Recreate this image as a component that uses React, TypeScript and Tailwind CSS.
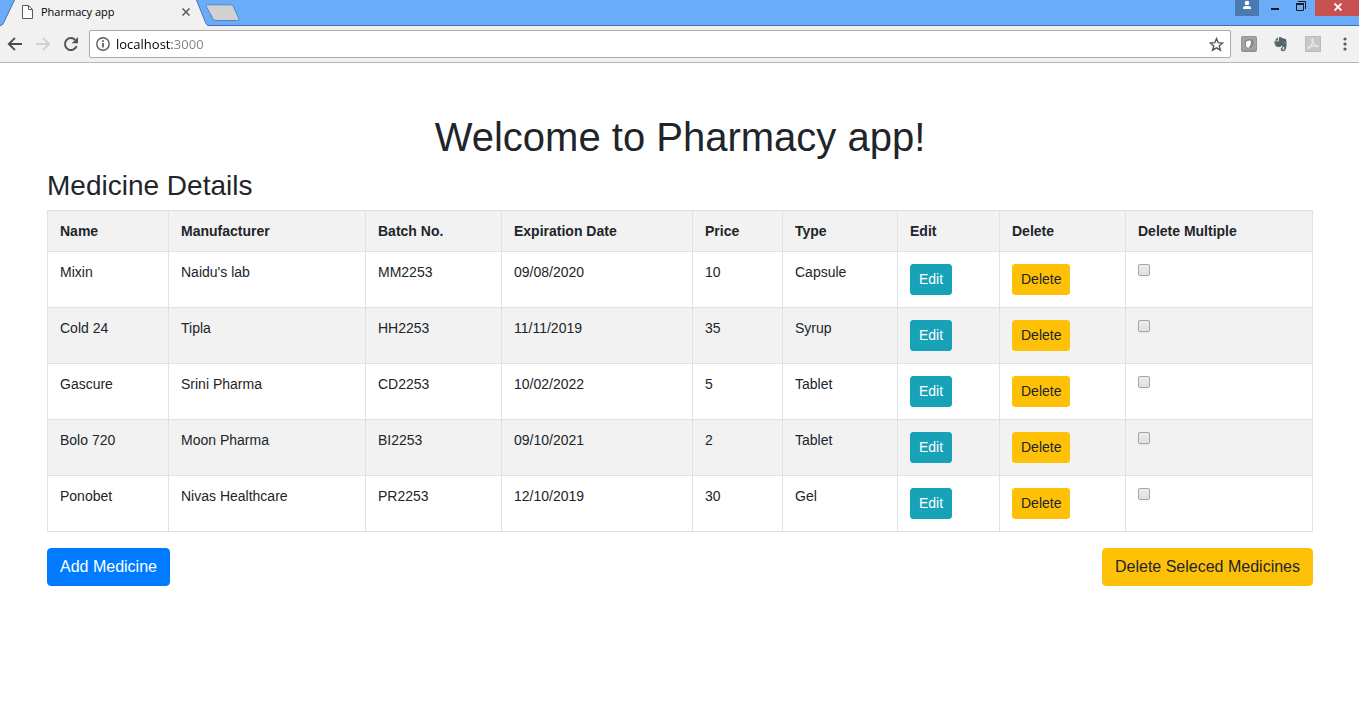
import React, { useState } from "react";

const medicines = [
  { name: "Mixin", maker: "Naidu's lab", batch: "MM2253", expires: "09/08/2020", price: 10, type: "Capsule" },
  { name: "Cold 24", maker: "Tipla", batch: "HH2253", expires: "11/11/2019", price: 35, type: "Syrup" },
  { name: "Gascure", maker: "Srini Pharma", batch: "CD2253", expires: "10/02/2022", price: 5, type: "Tablet" },
  { name: "Bolo 720", maker: "Moon Pharma", batch: "BI2253", expires: "09/10/2021", price: 2, type: "Tablet" },
  { name: "Ponobet", maker: "Nivas Healthcare", batch: "PR2253", expires: "12/10/2019", price: 30, type: "Gel" },
];

const columns = [
  { label: "Name", width: "w-[121px]" },
  { label: "Manufacturer", width: "w-[197px]" },
  { label: "Batch No.", width: "w-[136px]" },
  { label: "Expiration Date", width: "w-[191px]" },
  { label: "Price", width: "w-[90px]" },
  { label: "Type", width: "w-[115px]" },
  { label: "Edit", width: "w-[102px]" },
  { label: "Delete", width: "w-[126px]" },
  { label: "Delete Multiple", width: "" },
];

function TabStrip() {
  return (
    <div className="flex h-[26px] items-start border-b border-[#3f70b5] bg-[#6aacf8]">
      <div className="relative h-[26px] w-[208px] shrink-0">
        <svg className="absolute inset-0" width="208" height="26" viewBox="0 0 208 26" aria-hidden="true">
          <path d="M0 26 L3 24 L14.500 0 H196.500 L206 23 L208 26 Z" fill="#f1f1f1" />
          <path d="M0 25.500 Q2.500 25.500 3.500 23 L14.500 0 M196.500 0 L205.500 22.500 Q206.500 25 208 25.500" fill="none" stroke="#3f70b5" />
        </svg>
        <div className="relative flex h-6 items-center pr-4 pl-[22px]">
          <svg width="11" height="14" viewBox="0 0 11 14" fill="none" stroke="#5a5a5a" aria-hidden="true">
            <path d="M.5 .5 H6.500 L10.500 4.500 V13.500 H.5 Z" fill="#fff" />
            <path d="M6.500 .5 V4.500 H10.500" />
          </svg>
          <span className="ml-2 grow text-[11px] leading-4 text-black">Pharmacy app</span>
          <button aria-label="Close tab" className="flex size-3 items-center justify-center">
            <svg width="8" height="8" viewBox="0 0 8 8" stroke="#5a5a5a" strokeWidth="1.500">
              <path d="M.5 .5 L7.500 7.500 M7.500 .5 L.5 7.500" />
            </svg>
          </button>
        </div>
      </div>
      <button aria-label="New tab" className="-ml-1 pt-1">
        <svg width="37" height="18" viewBox="0 0 37 18">
          <path d="M3.500 .8 H26.500 Q28.500 .8 29.200 2.300 L34.800 14.500 Q35.500 16.500 33.500 16.500 H12 Q9.700 16.500 9 15 L2.300 2.500 Q1.700 .8 3.500 .8 Z" fill="#d1d1d1" stroke="#4f86c9" />
        </svg>
      </button>
      <div className="ml-auto flex">
        <button aria-label="Profile" className="flex h-4 w-6 justify-center bg-[#4a78b0]">
          <svg width="10" height="10" viewBox="0 0 10 10" fill="#fff">
            <circle cx="5" cy="3" r="2.300" />
            <path d="M1 9 V8 Q1 6 3.500 6 H6.500 Q9 6 9 8 V9 Z" />
          </svg>
        </button>
        <button aria-label="Minimize" className="flex h-4 w-8 justify-center">
          <svg width="8" height="11" viewBox="0 0 8 11"><path d="M0 9 H8" stroke="#1c1c1c" strokeWidth="2" /></svg>
        </button>
        <button aria-label="Restore" className="flex h-4 w-6 items-start pl-[5px]">
          <svg width="11" height="12" viewBox="0 0 11 12" fill="none" stroke="#1c1c1c">
            <path d="M2 1.500 H9.500 V9" />
            <path d="M.5 4 V10.500 H7.500 V4" />
            <path d="M0 4 H8" strokeWidth="2" />
          </svg>
        </button>
        <button aria-label="Close window" className="flex h-4 w-11 items-start justify-center bg-[#c75050] pt-[3px] pl-0.5">
          <svg width="8" height="8" viewBox="0 0 8 8" stroke="#fff" strokeWidth="1.8"><path d="M.5 .5 L7.500 7.500 M7.500 .5 L.5 7.500" /></svg>
        </button>
      </div>
    </div>
  );
}

function Toolbar() {
  const [url, setUrl] = useState("localhost:3000");
  return (
    <div className="flex h-[37px] items-center border-b border-[#b6b4b6] bg-[#f1f1f1] pr-1.5 pl-[7px]">
      <button aria-label="Back">
        <svg width="16" height="16" viewBox="0 0 16 16" fill="none" stroke="#4c4c4c" strokeWidth="1.900"><path d="M15 8 H2 M8 1.800 L1.800 8 L8 14.200" /></svg>
      </button>
      <button aria-label="Forward" className="ml-3">
        <svg width="16" height="16" viewBox="0 0 16 16" fill="none" stroke="#d0d0d0" strokeWidth="1.900"><path d="M1 8 H14 M8 1.800 L14.200 8 L8 14.200" /></svg>
      </button>
      <button aria-label="Reload" className="ml-3">
        <svg width="16" height="16" viewBox="0 0 16 16">
          <path d="M13.600 10 A6 6 0 1 1 12.300 3.900" fill="none" stroke="#555" strokeWidth="2" />
          <path d="M15 1 V7.300 H8.700 Z" fill="#555" />
        </svg>
      </button>
      <div className="ml-2.5 flex h-7 grow items-center rounded-xs border border-[#a9a9a9] bg-white px-1.5">
        <svg width="14" height="14" viewBox="0 0 14 14" aria-hidden="true">
          <circle cx="7" cy="7" r="6.200" fill="none" stroke="#5a5a5a" strokeWidth="1.400" />
          <path d="M7 6 V10.500 M7 3.300 V5" stroke="#5a5a5a" strokeWidth="1.700" />
        </svg>
        <input
          aria-label="Address"
          value={url}
          onChange={(e) => setUrl(e.target.value)}
          className="ml-1.5 h-5 min-w-0 grow bg-[linear-gradient(90deg,#000_56px,#808080_56px)] bg-clip-text text-[13px] leading-5 text-transparent caret-black outline-none"
        />
        <button aria-label="Bookmark this page">
          <svg width="15" height="15" viewBox="0 0 15 15" fill="none" stroke="#555" strokeWidth="1.400">
            <path d="M7.500 1.600 L9.200 5.700 L13.700 6 L10.200 8.900 L11.400 13.200 L7.500 10.800 L3.600 13.200 L4.800 8.900 L1.300 6 L5.800 5.700 Z" />
          </svg>
        </button>
      </div>
      <div className="ml-2.5 flex items-center gap-4">
        <button aria-label="Recorder extension">
          <svg width="16" height="16" viewBox="0 0 16 16">
            <rect width="16" height="16" rx="2" fill="#949494" />
            <rect x="1" y="1" width="14" height="13" rx="2" fill="#a3a3a3" />
            <path d="M4 5 Q6 2.500 11 3 Q13.500 6 12 10 Q10 13 6 12.700 Q2.800 10 4 5" fill="#868686" />
            <path d="M5.200 6 Q6 4.500 8 4.800 Q10 4 10 6 Q9.800 9.500 8 11.500 Q6.500 12 5.300 10.800 Q4.500 8 5.200 6 Z" fill="#fff" />
          </svg>
        </button>
        <button aria-label="Evernote">
          <svg width="16" height="16" viewBox="0 0 16 16" fill="#53666a">
            <path d="M5 1 V4.500 H1.800 Z" />
            <path d="M6 1.200 Q8 .5 9 2 L12 2.700 Q13.400 3 13.500 5 Q14 10 12.700 13.200 Q12 15.500 9.700 15.300 Q7.500 15 7.700 12.700 Q8 11 10 11 V12.500 Q9 12.500 9.200 13.300 Q9.500 14 10.700 13.700 Q11.500 13 11.300 11.200 Q9 11 8.500 9.500 Q8 11 6 11 Q3.500 11 2.600 9.900 Q1.200 7 1.300 5.300 H5.800 Z" />
            <path d="M10.700 6.500 Q12 6 12.200 7.500 Z" fill="#f1f1f1" />
          </svg>
        </button>
        <button aria-label="Adobe Acrobat">
          <svg width="16" height="16" viewBox="0 0 16 16">
            <path d="M.5 .5 H15.500 V15.500 H.5 Z" fill="#c8c8c8" stroke="#bababa" />
            <path d="M7 3 Q8.500 2 8 5 Q7 9 3.500 12.500 Q2.500 13 3 11.800 Q5 9.500 12.500 9.800 Q14 10.500 12.300 11 Q8.500 9.500 7 4.500 Z" fill="none" stroke="#f1f1f1" />
          </svg>
        </button>
        <button aria-label="Menu" className="flex w-4 justify-center">
          <svg width="4" height="14" viewBox="0 0 4 14" fill="#5a5a5a">
            <circle cx="2" cy="2" r="1.600" /><circle cx="2" cy="7" r="1.600" /><circle cx="2" cy="12" r="1.600" />
          </svg>
        </button>
      </div>
    </div>
  );
}

const cell = "border border-[#dee2e6] p-3 align-top leading-4";

export default function App() {
  return (
    <div className="min-h-screen bg-white font-['Liberation_Sans',Arial,sans-serif] text-[#212529]">
      <header className="font-['Open_Sans','Noto_Sans',sans-serif]">
        <TabStrip />
        <Toolbar />
      </header>
      <main className="pt-[50px] pr-[46px] pl-[47px]">
        <h1 className="mb-2 text-center text-[40px] leading-12">Welcome to Pharmacy app!</h1>
        <h2 className="mb-2 text-[28px] leading-[33px]">Medicine Details</h2>
        <table className="w-full table-fixed border-collapse text-left text-sm">
          <thead>
            <tr className="bg-[#f2f2f2]">
              {columns.map((c) => (
                <th key={c.label} scope="col" className={`${cell} ${c.width} font-bold`}>{c.label}</th>
              ))}
            </tr>
          </thead>
          <tbody>
            {medicines.map((m) => (
              <tr key={m.name} className="even:bg-[#f2f2f2]">
                <td className={cell}>{m.name}</td>
                <td className={cell}>{m.maker}</td>
                <td className={cell}>{m.batch}</td>
                <td className={cell}>{m.expires}</td>
                <td className={cell}>{m.price}</td>
                <td className={cell}>{m.type}</td>
                <td className={cell}>
                  <button className="block rounded-[3px] border border-[#17a2b8] bg-[#17a2b8] px-2 py-1 leading-[21px] text-white">Edit</button>
                </td>
                <td className={cell}>
                  <button className="block rounded-[3px] border border-[#ffc107] bg-[#ffc107] px-2 py-1 leading-[21px]">Delete</button>
                </td>
                <td className={cell}>
                  <input
                    type="checkbox"
                    aria-label={`Select ${m.name}`}
                    className="block size-3 appearance-none rounded-[2px] border border-[#a6a6a6] bg-linear-to-b from-[#ededed] to-[#dedede] shadow-xs checked:bg-[#007bff]"
                  />
                </td>
              </tr>
            ))}
          </tbody>
        </table>
        <div className="mt-4 flex justify-between">
          <button className="rounded-sm border border-[#007bff] bg-[#007bff] px-3 py-1.5 text-base text-white">Add Medicine</button>
          <button className="rounded-sm border border-[#ffc107] bg-[#ffc107] px-3 py-1.5 text-base">Delete Seleced Medicines</button>
        </div>
      </main>
    </div>
  );
}
